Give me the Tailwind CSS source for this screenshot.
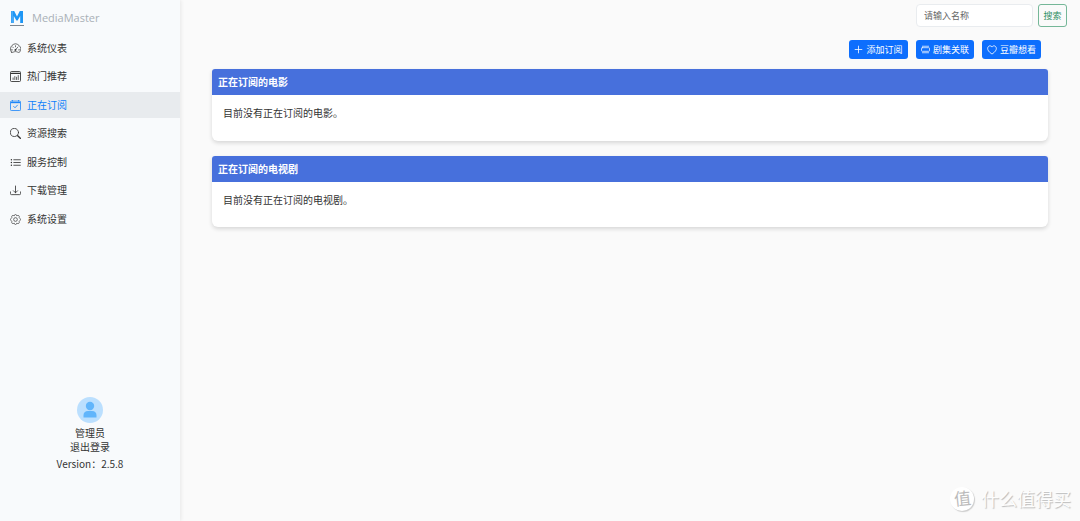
<!DOCTYPE html>
<html lang="zh-CN">
<head>
    <meta charset="UTF-8">
    <meta name="viewport" content="width=device-width, initial-scale=1.0">
    <script src="https://cdn.jsdelivr.net/npm/@tailwindcss/browser@4"></script>
    <title>MediaMaster</title>
</head>
<body class="flex min-h-screen bg-[#fafafa] font-['Open_Sans','Noto_Sans_CJK_SC',sans-serif] text-[10px] text-[#333]">

    <!-- Sidebar -->
    <aside class="flex w-[180px] shrink-0 flex-col bg-[#f8fafc] shadow-[1px_0_4px_rgba(0,0,0,0.08)]">
        <a href="#" class="flex h-[35px] items-center gap-2 px-[10px] pt-[2px] text-[11px] text-[#a9b0b7]">
            <svg class="h-[16px] w-[14px]" viewBox="0 0 14 16" fill="none">
                <path d="M1 0H4.200L7 5.500L9.800 0H13V12H10.200V5L7.600 9.500H6.400L3.800 5V12H1Z" fill="#1e96f5"/>
                <path d="M2.100 .5V12" stroke="#b9e0ff" stroke-width=".9" stroke-dasharray="1 1"/>
                <path d="M0 14.500H14" stroke="#7d8791" stroke-width="1"/>
            </svg>
            <span>MediaMaster</span>
        </a>

        <nav>
            <ul class="flex h-[197px] flex-col justify-between">
                <li>
                    <a href="#" class="flex h-[26px] items-center gap-[6px] px-[10px]">
                        <svg class="size-[11px]" viewBox="0 0 16 16" fill="none" stroke="currentColor" stroke-linecap="round">
                            <path d="M2.200 13.500A7.400 7.400 0 1 1 13.800 13.500C12.500 14.500 10.500 12.500 8 12.500S3.500 14.500 2.200 13.500Z"/>
                            <path d="M8 4V5.500M3.700 5.700L4.700 6.700M2 10H3.500M12.500 10H14M7.500 10.500L11.500 5.800"/>
                            <circle cx="7.800" cy="10" r=".8" fill="currentColor"/>
                        </svg>
                        系统仪表
                    </a>
                </li>
                <li>
                    <a href="#" class="flex h-[26px] items-center gap-[6px] px-[10px]">
                        <svg class="size-[11px]" viewBox="0 0 16 16" fill="none" stroke="currentColor">
                            <rect x=".7" y=".7" width="14.600" height="14.600" rx="1.500" stroke-width="1.300"/>
                            <path d="M1 3.500H15" stroke-width="1.800"/>
                            <path d="M4.500 13V9.500M7 13V7.500M9.500 13V8.500M12 13V6" stroke-width="1.100"/>
                        </svg>
                        热门推荐
                    </a>
                </li>
                <li>
                    <a href="#" aria-current="page" class="flex h-[26px] items-center gap-[6px] bg-[#e8ebee] px-[10px] text-[#0d7ffb]">
                        <svg class="size-[11px]" viewBox="0 0 16 16" fill="none" stroke="currentColor" stroke-width="1.200">
                            <rect x=".6" y="1.600" width="14.800" height="13.800" rx="1.600"/>
                            <path d="M1 3.800H15" stroke-width="1.600"/>
                            <path d="M3.500 0V2M12.500 0V2"/>
                            <path d="M5.300 9.300L7.300 11.300L10.800 7.500" stroke-linecap="round" stroke-linejoin="round"/>
                        </svg>
                        正在订阅
                    </a>
                </li>
                <li>
                    <a href="#" class="flex h-[26px] items-center gap-[6px] px-[10px]">
                        <svg class="size-[11px]" viewBox="0 0 16 16" fill="none" stroke="currentColor" stroke-linecap="round">
                            <circle cx="6.500" cy="6.500" r="5.900" stroke-width="1.200"/>
                            <path d="M11.200 11.200L15 15" stroke-width="2"/>
                        </svg>
                        资源搜索
                    </a>
                </li>
                <li>
                    <a href="#" class="flex h-[26px] items-center gap-[6px] px-[10px]">
                        <svg class="size-[11px]" viewBox="0 0 16 16" fill="none" stroke="currentColor" stroke-linecap="round">
                            <path d="M5.500 4H15M5.500 8H15M5.500 12H15" stroke-width="1.200"/>
                            <path d="M2 4H2.100M2 8H2.100M2 12H2.100" stroke-width="2"/>
                        </svg>
                        服务控制
                    </a>
                </li>
                <li>
                    <a href="#" class="flex h-[26px] items-center gap-[6px] px-[10px]">
                        <svg class="size-[11px]" viewBox="0 0 16 16" fill="none" stroke="currentColor" stroke-width="1.200" stroke-linecap="round" stroke-linejoin="round">
                            <path d="M.6 10V12.500A1.500 1.500 0 0 0 2.100 14H13.900A1.500 1.500 0 0 0 15.400 12.500V10"/>
                            <path d="M8 1.500V11.300M5 8.400L8 11.400L11 8.400"/>
                        </svg>
                        下载管理
                    </a>
                </li>
                <li>
                    <a href="#" class="flex h-[26px] items-center gap-[6px] px-[10px]">
                        <svg class="size-[11px]" viewBox="0 0 16 16" fill="none" stroke="currentColor" stroke-linejoin="round">
                            <circle cx="8" cy="8" r="2.700"/>
                            <path d="M6.800 1.200Q8 0 9.200 1.200L9.700 2.500L11.200 2.200Q13 1.700 13.500 3.500L13.300 5L14.600 6.700Q16 8 14.600 9.300L13.300 11L13.500 12.500Q13 14.300 11.200 13.800L9.700 13.500L9.200 14.800Q8 16 6.800 14.800L6.300 13.500L4.800 13.800Q3 14.300 2.500 12.500L2.700 11L1.400 9.300Q0 8 1.400 6.700L2.700 5L2.500 3.500Q3 1.700 4.800 2.200L6.300 2.500Z"/>
                        </svg>
                        系统设置
                    </a>
                </li>
            </ul>
        </nav>

        <!-- User info -->
        <div class="mt-auto flex flex-col items-center pb-[50px] leading-[14px]">
            <svg class="mb-[3px] size-[26px]" viewBox="0 0 26 26">
                <circle cx="13" cy="13" r="13" fill="#bbdffe"/>
                <circle cx="13" cy="9" r="4.200" fill="#61b5fb"/>
                <path d="M6.500 20.500V18.500Q6.500 14 11 14H15Q19.500 14 19.500 18.500V20.500Z" fill="#61b5fb"/>
            </svg>
            <span>管理员</span>
            <a href="#">退出登录</a>
            <span class="mt-[3px] font-['Noto_Sans_CJK_SC',sans-serif]">Version：2.5.8</span>
        </div>
    </aside>

    <div class="flex min-w-0 flex-1 flex-col">
        <!-- Search -->
        <form class="flex justify-end gap-[5px] pt-[4px] pr-[13px] text-[9px]">
            <input type="text" aria-label="请输入名称" placeholder="请输入名称" class="h-[23px] w-[117px] rounded-[4px] border border-[#e9ecef] bg-white px-[7px] outline-none placeholder:text-[#666]">
            <button type="button" class="h-[23px] w-[29px] rounded-[3px] border border-[#75b798] text-[#2f8f62]">搜索</button>
        </form>

        <main class="px-[32px]">
            <div class="mt-[13px] flex justify-end gap-[8px] pr-[7px] text-[9px] text-white">
                <button type="button" class="flex h-[19px] w-[59px] items-center justify-center gap-[3px] rounded-[3px] bg-[#0d6efd]">
                    <svg class="size-[9px]" viewBox="0 0 16 16" fill="none" stroke="currentColor" stroke-width="1.400" stroke-linecap="round">
                        <path d="M8 2V14M2 8H14"/>
                    </svg>
                    添加订阅
                </button>
                <button type="button" class="flex h-[19px] w-[58px] items-center justify-center gap-[3px] rounded-[3px] bg-[#0d6efd]">
                    <svg class="size-[9px]" viewBox="0 0 16 16" fill="none" stroke="currentColor" stroke-width="1.300" stroke-linecap="round">
                        <rect x=".8" y="4.800" width="14.400" height="6.400" rx="1.500"/>
                        <path d="M2.500 2.200H13.500M2.500 13.800H13.500"/>
                    </svg>
                    剧集关联
                </button>
                <button type="button" class="flex h-[19px] w-[59px] items-center justify-center gap-[3px] rounded-[3px] bg-[#0d6efd]">
                    <svg class="size-[10px]" viewBox="0 0 16 16" fill="none" stroke="currentColor" stroke-width="1.300" stroke-linejoin="round">
                        <path d="M8 14.500C-3 7.500 1.500 1 5 1.300C6.800 1.400 7.500 2.500 8 3.300C8.500 2.500 9.200 1.400 11 1.300C14.500 1 19 7.500 8 14.500Z"/>
                    </svg>
                    豆瓣想看
                </button>
            </div>

            <!-- Subscriptions -->
            <section class="mt-[10px] overflow-hidden rounded-t-[3px] rounded-b-[6px] bg-white shadow-[0_2px_4px_rgba(0,0,0,0.14)]">
                <h2 class="bg-[#4770dc] px-[6px] text-[10px] leading-[26px] font-bold text-white">正在订阅的电影</h2>
                <p class="px-[11px] pt-[10px] pb-[20px] leading-[16px]">目前没有正在订阅的电影。</p>
            </section>
            <section class="mt-[15px] overflow-hidden rounded-t-[3px] rounded-b-[6px] bg-white shadow-[0_2px_4px_rgba(0,0,0,0.14)]">
                <h2 class="bg-[#4770dc] px-[6px] text-[10px] leading-[26px] font-bold text-white">正在订阅的电视剧</h2>
                <p class="px-[11px] pt-[10px] pb-[19px] leading-[16px]">目前没有正在订阅的电视剧。</p>
            </section>
        </main>

        <!-- Watermark -->
        <div class="mt-auto flex items-center justify-end gap-[7px] pr-[9px] pb-[9px] text-[18px] leading-[26px] text-[#fdfdfd] [text-shadow:1px_1px_1px_#bbb]">
            <span class="flex size-[24px] items-center justify-center rounded-full bg-white text-[17px] text-[#bbb] shadow-[1px_1px_1px_#ccc] [text-shadow:none]"><span class="-rotate-6">值</span></span>
            <span>什么值得买</span>
        </div>
    </div>
</body>
</html>
